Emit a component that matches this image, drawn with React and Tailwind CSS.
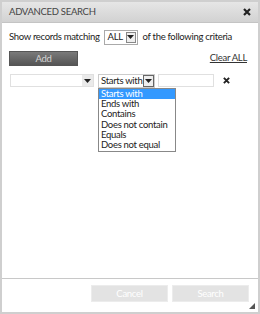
import React from 'react';

const font = { fontFamily: 'Lato, "Liberation Sans", sans-serif' };

function Arrow() {
  return (
    <svg width="7" height="4" viewBox="0 0 7 4">
      <path d="M0 0h7L3.5 4z" fill="#222" />
    </svg>
  );
}

function CloseX({ size = 8 }) {
  return (
    <svg width={size} height={size} viewBox="0 0 8 8">
      <path d="M1 1l6 6M7 1L1 7" stroke="#222" strokeWidth="2.2" />
    </svg>
  );
}

const options = ['Starts with', 'Ends with', 'Contains', 'Does not contain', 'Equals', 'Does not equal'];

export default function App() {
  return (
    <div
      className="w-[260px] h-[314px] flex flex-col bg-white border-2 border-[#cfcfcf] text-[9.5px] tracking-[-0.3px] leading-[12px] text-[#222] overflow-hidden whitespace-nowrap"
      style={font}
    >
      {/* Title bar */}
      <div className="h-[21px] shrink-0 flex items-center justify-between pl-[7px] pr-[7px] bg-gradient-to-b from-[#e6e6e6] to-[#d2d2d2] border-b border-[#c4c4c4]">
        <span className="text-[#444]">ADVANCED SEARCH</span>
        <CloseX />
      </div>

      {/* Body */}
      <div className="flex-1 px-[7px] pt-[6px] relative">
        <div className="flex items-center h-[16px]">
          <span>Show records matching</span>
          <div className="ml-[4px] flex items-center h-[15px] w-[34px] border border-[#aaa] bg-white">
            <span className="flex-1 pl-[3px]">ALL</span>
            <div className="h-[11px] w-[10px] mr-[1px] flex items-center justify-center border border-[#888] bg-[#eee]">
              <Arrow />
            </div>
          </div>
          <span className="ml-[5px]">of the following criteria</span>
        </div>

        <div className="flex items-start justify-between mt-[6px]">
          <button className="w-[69px] h-[15px] bg-gradient-to-b from-[#7a7a7a] to-[#555] border border-[#555] text-[#d4d4d4] leading-none flex items-center justify-center">
            Add
          </button>
          <span className="underline mt-[1px] mr-[4px] text-[#333]">Clear ALL</span>
        </div>

        <div className="flex items-center mt-[8px] h-[13px]">
          <div className="w-[84px] h-[13px] ml-[1px] flex border border-[#e0e0e0] bg-white">
            <div className="flex-1" />
            <div className="w-[11px] bg-[#eaeaea] flex items-center justify-center">
              <Arrow />
            </div>
          </div>
          <div className="relative ml-[4px]">
            <div className="w-[57px] h-[14px] flex items-center border border-[#ccc] bg-white">
              <span className="flex-1 pl-[2px]">Starts with</span>
              <div className="w-[11px] h-[12px] flex items-center justify-center border border-[#666] bg-[#eee]">
                <Arrow />
              </div>
            </div>
            <ul className="absolute left-0 top-[14px] w-[78px] border border-[#888] bg-white">
              {options.map((o, i) => (
                <li
                  key={o}
                  className={`h-[10.4px] leading-[10.4px] pl-[2px] ${
                    i === 0 ? 'bg-[#3399ff] text-white' : 'text-[#222]'
                  }`}
                >
                  {o}
                </li>
              ))}
            </ul>
          </div>
          <div className="ml-[3px] w-[56px] h-[13px] border border-[#e0e0e0] bg-white" />
          <div className="ml-[9px] flex items-center">
            <CloseX size={7} />
          </div>
        </div>
      </div>

      {/* Footer */}
      <div className="h-[34px] shrink-0 border-t border-[#c8c8c8] flex justify-end items-start pt-[6px] pr-[9px] gap-[4px] relative">
        <button className="w-[77px] h-[17px] bg-[#e3e3e3] border border-[#ececec] text-white leading-none">
          Cancel
        </button>
        <button className="w-[77px] h-[17px] bg-[#e3e3e3] border border-[#ececec] text-white leading-none">
          Search
        </button>
        <svg className="absolute right-[3px] bottom-[3px]" width="6" height="6" viewBox="0 0 6 6">
          <path d="M6 0L0 6h6z" fill="#555" />
        </svg>
      </div>
    </div>
  );
}
